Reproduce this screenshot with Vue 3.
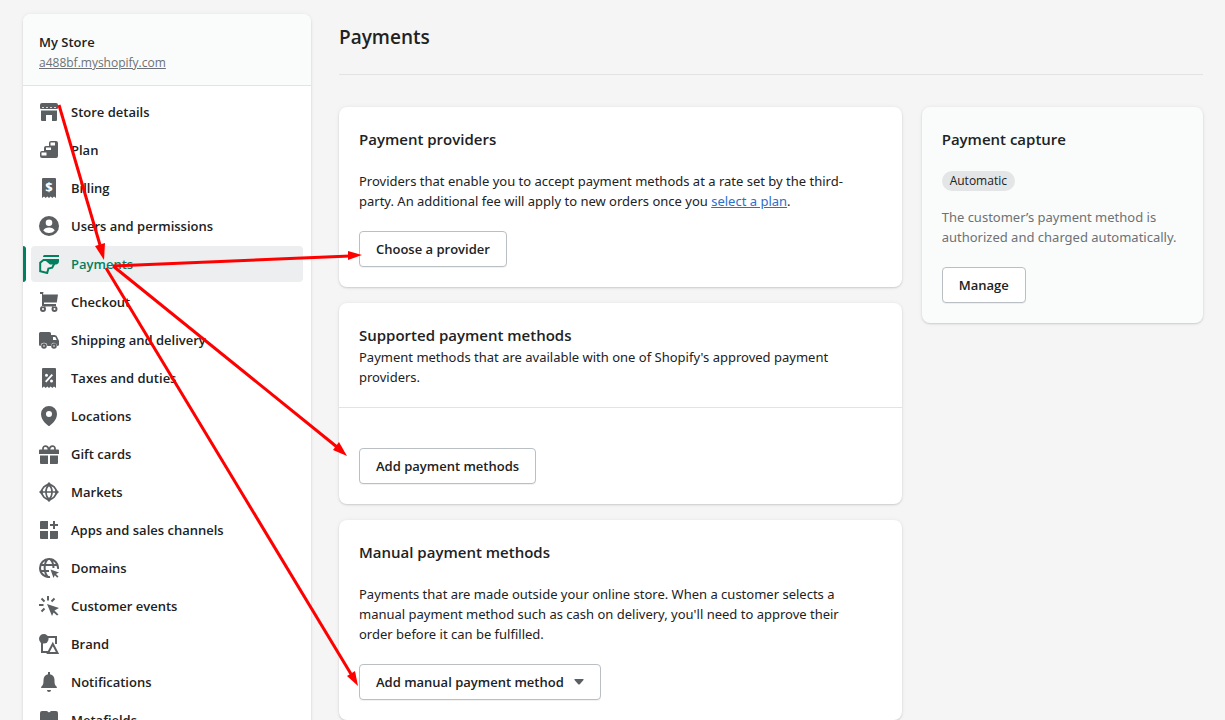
<script setup>
import { ref } from 'vue'

const active = ref('Payments')

// fill: solid shapes, line: 2px strokes, cut: shapes knocked out in white
const items = [
  {
    label: 'Store details',
    fill: 'M3 1h14a2 2 0 0 1 2 2v3a1 1 0 0 1-1 1H2a1 1 0 0 1-1-1V3a2 2 0 0 1 2-2zM3 5v.8h2V5zM7 5v.8h2V5zM11 5v.8h2V5zM15 5v.8h2V5zM2 8.500h16V18a1 1 0 0 1-1 1h-4v-6H7v6H3a1 1 0 0 1-1-1z'
  },
  {
    label: 'Plan',
    fill: 'M12 1h5a2 2 0 0 1 2 2v13a2 2 0 0 1-2 2H3a2 2 0 0 1-2-2v-3a2 2 0 0 1 2-2h2V8a2 2 0 0 1 2-2h3V3a2 2 0 0 1 2-2zM11.500 2.500v3h4.500v-3zM7 7.500v2.500h5V7.500zM2.500 12.500v3h5v-3z'
  },
  {
    label: 'Billing',
    fill: 'M4 0h12a1 1 0 0 1 1 1v19l-2-1.500-1.700 1.500-1.600-1.500L10 20l-1.700-1.500L6.700 20 5 18.500 3 20V1a1 1 0 0 1 1-1z',
    symbol: '$'
  },
  {
    label: 'Users and permissions',
    fill: 'M10 0a10 10 0 1 0 0 20 10 10 0 0 0 0-20z',
    cut: 'M10 3.500a3.300 3.300 0 1 0 0 6.600 3.300 3.300 0 0 0 0-6.600zM4.300 14.500c.8-1.900 3-3 5.700-3s4.900 1.100 5.700 3A7.500 7.500 0 0 1 10 17a7.500 7.500 0 0 1-5.700-2.500z'
  },
  {
    label: 'Payments',
    fill: 'M5.500 1H20v2H4c0-1.200.6-2 1.500-2zM5 5h15v2c0 2-1.200 3.500-3.200 3.500H11L8 8z',
    line: 'M8 6H4.500L1.200 8.800v8.400L8.200 19l1.200-4.500 3.800-.8 2-4'
  },
  {
    label: 'Checkout',
    fill: 'M4 2.500h15l-1.200 8H5V12h12v2.500H3V2H1V0h3.500zM4 14a3 3 0 1 0 0 6 3 3 0 0 0 0-6zm0 2a1 1 0 1 1 0 2 1 1 0 0 1 0-2zM15.500 14a3 3 0 1 0 0 6 3 3 0 0 0 0-6zm0 2a1 1 0 1 1 0 2 1 1 0 0 1 0-2z'
  },
  {
    label: 'Shipping and delivery',
    fill: 'M1.500 2h9A1.500 1.500 0 0 1 12 3.500V16H8.300a3.300 3.300 0 0 0-6.600 0H1.500A1.500 1.500 0 0 1 0 14.500v-11A1.500 1.500 0 0 1 1.500 2zM12 5h3.500l2 .8 2 4 .5 1.200v4l-1 1h-.7a3.300 3.300 0 0 0-6.300-1.200zM14 7v3h3.700L16.300 7zM5 13.200a2.800 2.800 0 1 0 0 5.600 2.800 2.800 0 0 0 0-5.600zm0 2a.8.8 0 1 1 0 1.600.8.8 0 0 1 0-1.600zM15 13.200a2.800 2.800 0 1 0 0 5.600 2.800 2.800 0 0 0 0-5.600zm0 2a.8.8 0 1 1 0 1.600.8.8 0 0 1 0-1.600z'
  },
  {
    label: 'Taxes and duties',
    fill: 'M4 0h12a1 1 0 0 1 1 1v19l-2-1.500-1.700 1.500-1.600-1.500L10 20l-1.700-1.500L6.700 20 5 18.500 3 20V1a1 1 0 0 1 1-1z',
    cut: 'M12.600 6l1.400 1.200-6.600 7.300L6 13.200zM7.500 5.800a1.500 1.500 0 1 0 0 3 1.500 1.500 0 0 0 0-3zM12.500 11.500a1.500 1.500 0 1 0 0 3 1.500 1.500 0 0 0 0-3z'
  },
  {
    label: 'Locations',
    fill: 'M10 0a8 8 0 0 0-8 8c0 6.500 6.200 10.700 7 11.600a1.400 1.400 0 0 0 2 0c.8-.9 7-5.100 7-11.600a8 8 0 0 0-8-8zm0 5a3 3 0 1 1 0 6 3 3 0 0 1 0-6z'
  },
  {
    label: 'Gift cards',
    fill: 'M1 5.500h18a1 1 0 0 1 1 1V10H0V6.500a1 1 0 0 1 1-1zM1 11.500h8V20H2a1 1 0 0 1-1-1zM11 11.500h8V19a1 1 0 0 1-1 1h-7z',
    line: 'M4 6V4.500a2.300 2.300 0 0 1 2.300-2.300c2 0 3.200 1.300 3.200 3.800M16 6V4.500a2.300 2.300 0 0 0-2.300-2.300c-2 0-3.200 1.300-3.200 3.800',
    thin: true
  },
  {
    label: 'Markets',
    fill: 'M10 0l3.500 3.500h-7zM10 20l3.500-3.500h-7zM0 10l3.500-3.500v7zM20 10l-3.500-3.500v7z',
    line: 'M10 2.800a7.200 7.200 0 1 0 0 14.400 7.200 7.200 0 0 0 0-14.400zM10 3C6 6 6 14 10 17M10 3c4 3 4 11 0 14M2 10h16',
    thin: true
  },
  {
    label: 'Apps and sales channels',
    fill: 'M2 1h7v8H1V2a1 1 0 0 1 1-1zM1 11h8v8H2a1 1 0 0 1-1-1zM11 11h8v7a1 1 0 0 1-1 1h-7zM14 1h2v3h3v2h-3v3h-2V6h-3V4h3z'
  },
  {
    label: 'Domains',
    fill: 'M11.500 11.500l8.500 3-3 1.500 2.500 2.500-1.200 1.200-2.500-2.500-1.300 2.800z',
    line: 'M11 19A9 9 0 1 1 19 10.800M9 1C4.500 5 4.500 14 9 19M11 1c3 2.500 3.500 5.500 3.500 9M2 7h16M1.500 13H10'
  },
  {
    label: 'Customer events',
    fill: 'M8 8l12 4-4.500 2.500L13 20zM15 14l4.500 4.500-1.500 1L14 16z',
    line: 'M9 0v4.500M0 9h4.500M2.500 2.500l3 3M15.500 2.500l-3 3M2.500 15.500l3-3',
    nonzero: true
  },
  {
    label: 'Brand',
    fill: 'M4.800 0a4.800 4.800 0 1 0 0 9.600 4.800 4.800 0 0 0 0-9.600z',
    line: 'M8 3h9v7M3 8v10h6M13.800 10 9 19h9.500z'
  },
  {
    label: 'Notifications',
    fill: 'M9 0h2v2.300c3 .5 4.500 2.800 4.500 5.700 0 4 .5 5 2 6.500.8.8.5 1.500-.5 1.500H3c-1 0-1.300-.7-.5-1.500C4 13 4.500 12 4.500 8c0-2.900 1.500-5.200 4.500-5.700zM8 18h4c0 1.200-.8 2-2 2s-2-.8-2-2z'
  },
  {
    label: 'Metafields',
    fill: 'M3 1h4.500C8.500 1 9 2 10 2.500 11 2 11.500 1 12.500 1H17a2 2 0 0 1 2 2v14a2 2 0 0 1-2 2H3a2 2 0 0 1-2-2V3a2 2 0 0 1 2-2z'
  }
]

const arrows = [
  { x1: 59, y1: 105, x2: 100, y2: 245, head: '104,260 95,246 105,243' },
  { x1: 113, y1: 266, x2: 350, y2: 256, head: '362,255 348,251 348,260' },
  { x1: 113, y1: 266, x2: 337, y2: 447, head: '347,456 333,450 339,442' },
  { x1: 106, y1: 268, x2: 351, y2: 674, head: '358,686 347,676 355,671' }
]
</script>

<template>
  <div class="settings">
    <aside class="sidebar">
      <header class="store">
        <strong>My Store</strong>
        <a href="#">a488bf.myshopify.com</a>
      </header>
      <nav>
        <a
          v-for="item in items"
          :key="item.label"
          href="#"
          class="nav-item"
          :class="{ active: item.label === active }"
          @click.prevent="active = item.label"
        >
          <svg class="icon" viewBox="0 0 20 20" aria-hidden="true">
            <path v-if="item.fill" :d="item.fill" :class="{ solid: item.nonzero }" class="fill" />
            <path v-if="item.line" :d="item.line" class="line" :class="{ thin: item.thin }" />
            <path v-if="item.cut" :d="item.cut" class="cut" />
            <text v-if="item.symbol" x="10" y="14" class="symbol">{{ item.symbol }}</text>
          </svg>
          <span>{{ item.label }}</span>
        </a>
      </nav>
    </aside>

    <main class="content">
      <h1>Payments</h1>

      <div class="columns">
        <div class="stack">
          <section class="card">
            <h2>Payment providers</h2>
            <p class="spaced">
              Providers that enable you to accept payment methods at a rate set by the third-party. An
              additional fee will apply to new orders once you <a href="#">select a plan</a>.
            </p>
            <button type="button" class="button">Choose a provider</button>
          </section>

          <section class="card split">
            <div class="card-top">
              <h2>Supported payment methods</h2>
              <p>Payment methods that are available with one of Shopify's approved payment providers.</p>
            </div>
            <div class="card-bottom">
              <button type="button" class="button">Add payment methods</button>
            </div>
          </section>

          <section class="card">
            <h2>Manual payment methods</h2>
            <p class="spaced">
              Payments that are made outside your online store. When a customer selects a manual payment
              method such as cash on delivery, you'll need to approve their order before it can be
              fulfilled.
            </p>
            <button type="button" class="button">
              Add manual payment method
              <svg class="caret" viewBox="0 0 10 6" aria-hidden="true"><path d="M1 0h8q1 0 .5 1L6 5q-1 1-2 0L.5 1Q0 0 1 0z" /></svg>
            </button>
          </section>
        </div>

        <section class="card capture">
          <h2>Payment capture</h2>
          <span class="badge">Automatic</span>
          <p>The customer’s payment method is authorized and charged automatically.</p>
          <button type="button" class="button">Manage</button>
        </section>
      </div>
    </main>

    <svg class="arrows" aria-hidden="true">
      <g v-for="(a, i) in arrows" :key="i">
        <line :x1="a.x1" :y1="a.y1" :x2="a.x2" :y2="a.y2" />
        <polygon :points="a.head" />
      </g>
    </svg>
  </div>
</template>

<style>
body {
  background: #f5f5f5;
  overflow: hidden;
}
</style>

<style scoped>
.settings {
  position: relative;
  display: flex;
  align-items: flex-start;
  gap: 28px;
  height: 100vh;
  padding: 14px 22px 0 23px;
  box-sizing: border-box;
  overflow: hidden;
  font-family: "Open Sans", "Noto Sans", sans-serif;
  font-size: 13px;
  line-height: 20px;
  color: #202223;
}

.sidebar {
  flex: 0 0 288px;
  background: #fff;
  border-radius: 8px;
  box-shadow: 0 0 5px rgba(23, 24, 24, 0.05), 0 1px 2px rgba(0, 0, 0, 0.15);
}

.store {
  display: flex;
  flex-direction: column;
  gap: 1px;
  padding: 18px 16px 12px;
  background: #fafcfb;
  border-bottom: 1px solid #e1e3e5;
  border-radius: 8px 8px 0 0;
}

.store strong {
  font-weight: 600;
}

.store a {
  font-size: 12px;
  color: #6d7175;
}

nav {
  display: flex;
  flex-direction: column;
  gap: 2px;
  padding: 8px 8px 8px 0;
}

.nav-item {
  display: flex;
  align-items: center;
  gap: 12px;
  height: 36px;
  margin-left: 8px;
  padding: 0 8px;
  border-radius: 4px;
  color: #202223;
  font-weight: 600;
  text-decoration: none;
}

.nav-item.active {
  position: relative;
  background: #edeeef;
  color: #008060;
}

.nav-item.active::before {
  content: "";
  position: absolute;
  left: -8px;
  top: 0;
  bottom: 0;
  width: 3px;
  background: #008060;
  border-radius: 0 4px 4px 0;
}

.icon {
  flex: none;
  width: 20px;
  height: 20px;
  color: #5c5f62;
}

.active .icon {
  color: #008060;
}

.fill {
  fill: currentColor;
  fill-rule: evenodd;
}

.fill.solid {
  fill-rule: nonzero;
}

.line {
  fill: none;
  stroke: currentColor;
  stroke-width: 2;
}

.line.thin {
  stroke-width: 1.7;
}

.cut {
  fill: #fff;
}

.symbol {
  fill: #fff;
  font-size: 13px;
  font-weight: 700;
  text-anchor: middle;
}

.content {
  flex: 1;
  min-width: 0;
}

h1 {
  margin: 0 0 32px;
  padding: 9px 0 23px;
  border-bottom: 1px solid #e1e3e5;
  font-size: 19px;
  font-weight: 600;
  line-height: 28px;
}

h2 {
  margin: 0;
  font-size: 15px;
  font-weight: 600;
  line-height: 24px;
}

p {
  margin: 0;
  font-family: "Noto Sans", "Open Sans", sans-serif;
}

p a {
  color: #2c6ecb;
}

.columns {
  display: grid;
  grid-template-columns: 2fr 1fr;
  align-items: start;
  gap: 20px;
}

.stack {
  display: flex;
  flex-direction: column;
  gap: 16px;
}

.card {
  padding: 20px;
  background: #fff;
  border-radius: 8px;
  box-shadow: 0 0 5px rgba(23, 24, 24, 0.05), 0 1px 2px rgba(0, 0, 0, 0.15);
}

.spaced {
  margin: 20px 0;
  padding-right: 16px;
}

.split {
  padding: 0;
}

.card-top {
  padding: 20px;
  border-bottom: 1px solid #e1e3e5;
}

.card-bottom {
  padding: 40px 20px 20px;
}

.button {
  display: inline-flex;
  align-items: center;
  gap: 10px;
  height: 36px;
  padding: 0 16px;
  background: #fff;
  border: 1px solid #babfc3;
  border-radius: 4px;
  box-shadow: 0 1px 0 rgba(0, 0, 0, 0.05);
  color: #202223;
  font: inherit;
  font-weight: 600;
  vertical-align: top;
}

.caret {
  width: 10px;
  height: 6px;
  fill: #5c5f62;
}

.capture {
  display: flex;
  flex-direction: column;
  align-items: flex-start;
  background: #fafcfb;
}

.capture p {
  margin: 16px 0 20px;
  color: #6d7175;
}

.badge {
  margin-top: 20px;
  padding: 0 8px;
  background: #e4e5e7;
  border-radius: 10px;
  font-size: 12px;
}

.arrows {
  position: absolute;
  left: 0;
  top: 0;
  width: 100%;
  height: 100%;
  pointer-events: none;
}

.arrows line {
  stroke: #f00;
  stroke-width: 3;
}

.arrows polygon {
  fill: #f00;
}
</style>
